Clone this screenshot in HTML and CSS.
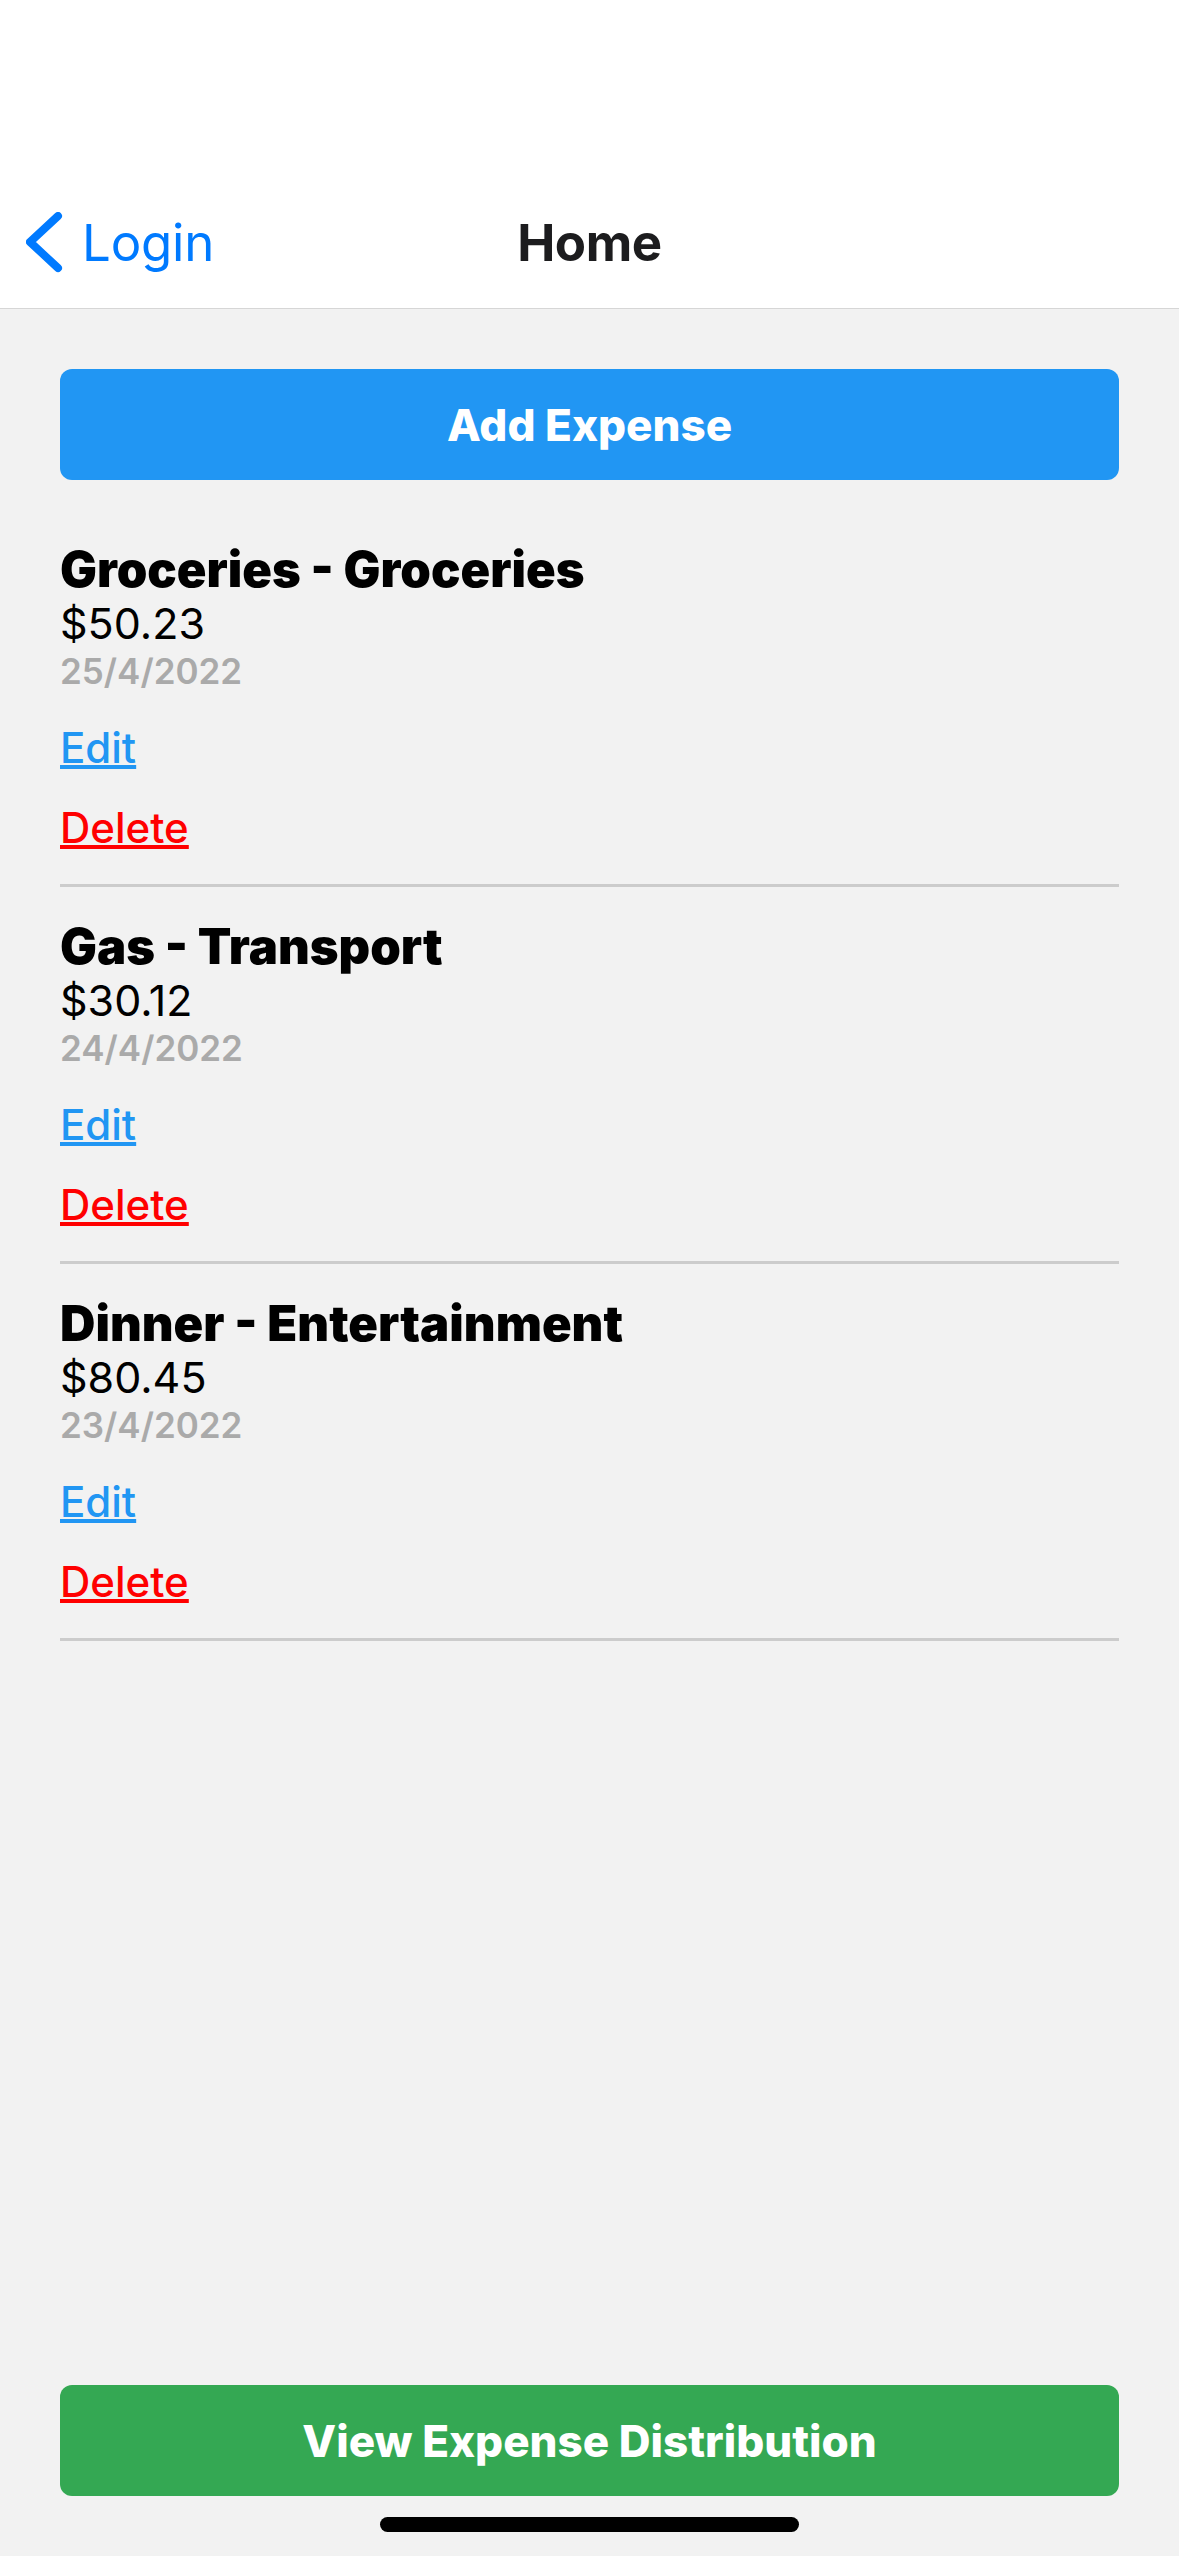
FILE: index.html
```html
<!DOCTYPE html>
<html lang="en">
<head>
<meta charset="utf-8">
<title>Home</title>
<link rel="stylesheet" href="styles.css">
</head>
<body>
<div class="screen">
  <header class="header">
    <nav class="nav">
      <a class="back" href="#">
        <svg class="chevron" width="38" height="62" viewBox="0 0 38 62" aria-hidden="true">
          <path d="M32 4 L4 30 L32 56" fill="none" stroke="#007aff" stroke-width="8" stroke-linecap="round" stroke-linejoin="round"/>
        </svg>
        <span class="back-label">Login</span>
      </a>
      <h1 class="title">Home</h1>
      <span class="spacer"></span>
    </nav>
  </header>

  <main class="content">
    <button class="btn btn-blue" type="button">Add Expense</button>

    <ul class="list">
      <li class="item">
        <div class="item-title">Groceries - Groceries</div>
        <div class="item-amount">$50.23</div>
        <div class="item-date">25/4/2022</div>
        <div class="actions">
          <a class="link link-edit" href="#">Edit</a>
          <a class="link link-delete" href="#">Delete</a>
        </div>
      </li>
      <li class="item">
        <div class="item-title">Gas - Transport</div>
        <div class="item-amount">$30.12</div>
        <div class="item-date">24/4/2022</div>
        <div class="actions">
          <a class="link link-edit" href="#">Edit</a>
          <a class="link link-delete" href="#">Delete</a>
        </div>
      </li>
      <li class="item">
        <div class="item-title">Dinner - Entertainment</div>
        <div class="item-amount">$80.45</div>
        <div class="item-date">23/4/2022</div>
        <div class="actions">
          <a class="link link-edit" href="#">Edit</a>
          <a class="link link-delete" href="#">Delete</a>
        </div>
      </li>
    </ul>
  </main>

  <footer class="footer">
    <button class="btn btn-green" type="button">View Expense Distribution</button>
  </footer>

  <div class="home-indicator"></div>
</div>
</body>
</html>
```

FILE: styles.css
```css
* {
  box-sizing: border-box;
}

html, body {
  margin: 0;
  padding: 0;
}

body {
  font-family: Inter, "Noto Sans", "Liberation Sans", sans-serif;
  background: #f2f2f2;
  color: #000;
}

.screen {
  position: relative;
  width: 1179px;
  height: 2556px;
  display: flex;
  flex-direction: column;
  overflow: hidden;
}

/* Header */
.header {
  background: #ffffff;
  padding-top: 177px;
  border-bottom: 1px solid #d6d6d6;
  flex: none;
}

.nav {
  height: 131px;
  display: grid;
  grid-template-columns: 1fr auto 1fr;
  align-items: center;
}

.back {
  display: flex;
  align-items: center;
  gap: 18px;
  padding-left: 26px;
  text-decoration: none;
  color: #007aff;
  justify-self: start;
}

.chevron {
  display: block;
  flex: none;
}

.back-label {
  font-size: 51px;
  font-weight: 400;
  letter-spacing: -0.2px;
}

.title {
  margin: 0;
  font-size: 51px;
  font-weight: 700;
  color: #1c1c1e;
  letter-spacing: -0.4px;
}

/* Content */
.content {
  flex: 1;
  padding: 60px 60px 0;
}

.btn {
  display: flex;
  align-items: center;
  justify-content: center;
  width: 100%;
  height: 111px;
  border: none;
  border-radius: 12px;
  color: #ffffff;
  font-family: Inter, "Noto Sans", "Liberation Sans", sans-serif;
  font-size: 44px;
  font-weight: 800;
  letter-spacing: 0;
  padding: 0;
}

.btn-blue {
  background: #2196f3;
}

.btn-green {
  background: #34a853;
}

.list {
  list-style: none;
  margin: 30px 0 0;
  padding: 0;
}

.item {
  padding: 32px 0 31px;
  border-bottom: 3px solid #cccccc;
  display: flex;
  flex-direction: column;
  align-items: flex-start;
}

.item-title {
  font-size: 49px;
  line-height: 56px;
  font-weight: 900;
  letter-spacing: 0;
  color: #000;
}

.item-amount {
  font-size: 43px;
  line-height: 50px;
  font-weight: 400;
  color: #000;
}

.item-date {
  font-size: 35px;
  line-height: 46px;
  font-weight: 600;
  color: #aaaaaa;
}

.actions {
  margin-top: 29px;
  display: flex;
  flex-direction: column;
  align-items: flex-start;
  gap: 30px;
}

.link {
  font-size: 42px;
  line-height: 50px;
  font-weight: 500;
  text-decoration: underline;
  text-decoration-thickness: 4px;
  text-underline-offset: 2px;
}

.link-edit {
  color: #2196f3;
}

.link-delete {
  color: #ff0000;
}

/* Footer */
.footer {
  flex: none;
  padding: 0 60px 60px;
}

.home-indicator {
  position: absolute;
  left: 380px;
  bottom: 24px;
  width: 419px;
  height: 15px;
  border-radius: 8px;
  background: #000000;
}
```
